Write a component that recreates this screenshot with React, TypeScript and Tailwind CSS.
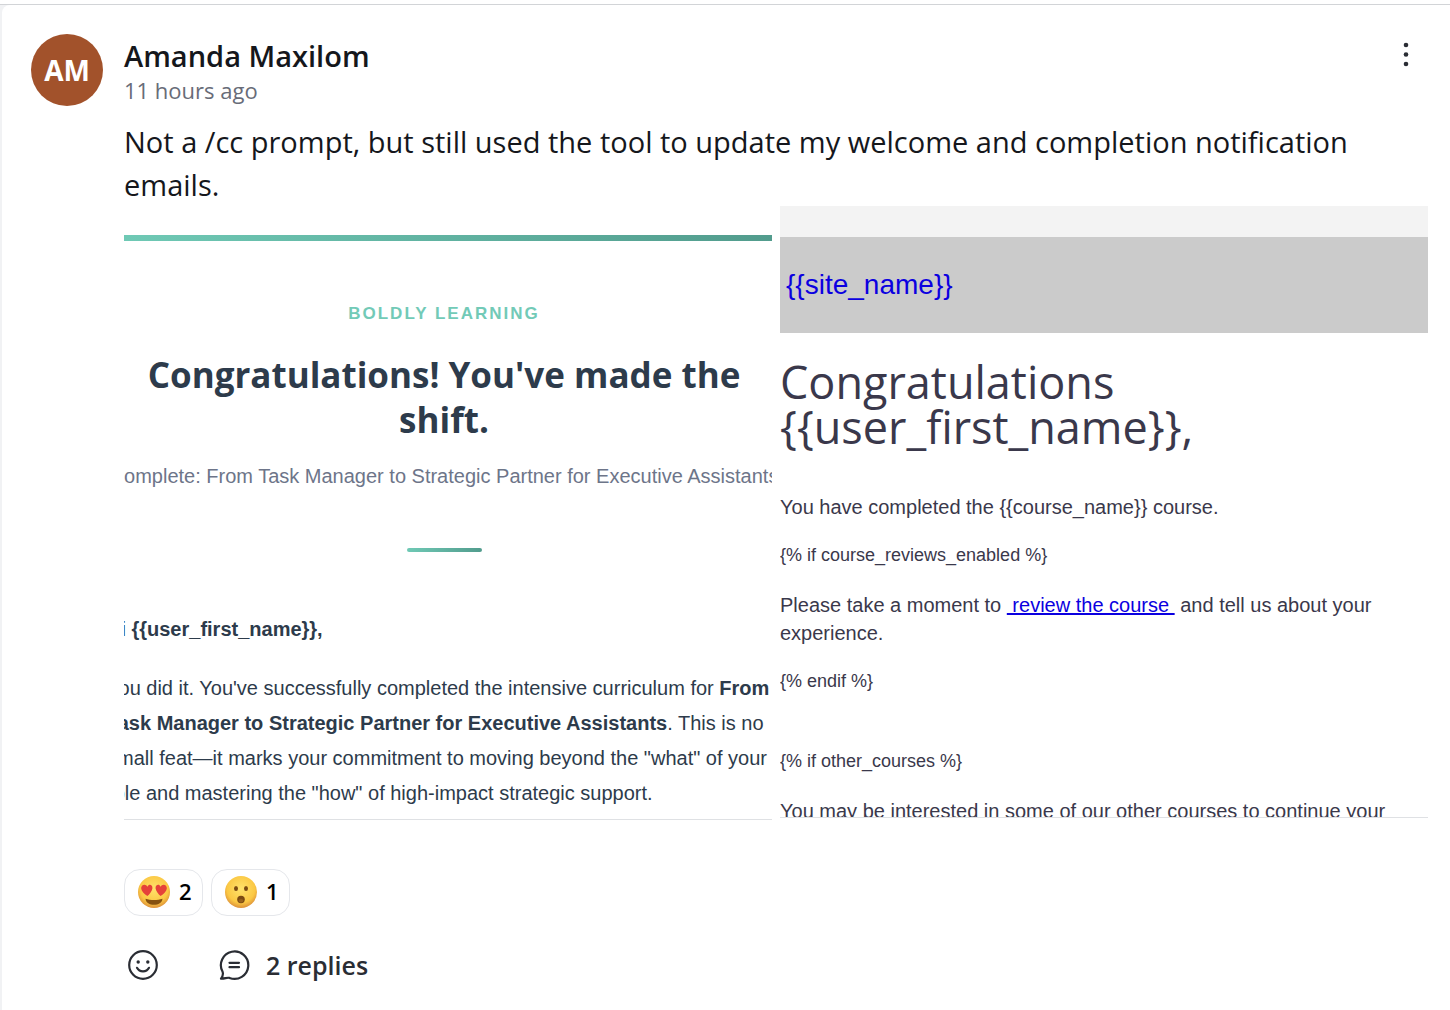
import { ReactNode } from "react";

const HeartEyes = () => (
  <svg className="size-[34px]" viewBox="-1 -1 34 34" aria-hidden="true">
    <defs>
      <radialGradient id="face-a" cx="0.5" cy="0.4" r="0.62">
        <stop offset="0" stopColor="#ffe26b" />
        <stop offset="0.7" stopColor="#fbc844" />
        <stop offset="1" stopColor="#d98a38" />
      </radialGradient>
    </defs>
    <circle cx="16" cy="16" r="16" fill="url(#face-a)" />
    <path
      d="M9.500 10.800C7.800 7 2.600 8.600 3.200 12.800c.5 3 3.200 5.200 6.200 7.200 2.300-2.200 4.600-4.800 5-7.600.5-4-3.900-5-4.900-1.600Z"
      fill="#e5423a"
    />
    <path
      d="M22.500 10.800c1.700-3.800 6.900-2.200 6.300 2-.5 3-3.200 5.200-6.200 7.200-2.300-2.200-4.600-4.800-5-7.600-.5-4 3.900-5 4.900-1.600Z"
      fill="#e5423a"
    />
    <path d="M7.500 22.800c5 1.700 12 1.700 17 0-.4 4-4.200 6-8.500 6s-8.100-2-8.500-6Z" fill="#85500f" />
  </svg>
);

const Surprised = () => (
  <svg className="size-[34px]" viewBox="-1 -1 34 34" aria-hidden="true">
    <defs>
      <radialGradient id="face-b" cx="0.5" cy="0.4" r="0.62">
        <stop offset="0" stopColor="#ffe26b" />
        <stop offset="0.7" stopColor="#fbc844" />
        <stop offset="1" stopColor="#d98a38" />
      </radialGradient>
    </defs>
    <circle cx="16" cy="16" r="16" fill="url(#face-b)" />
    <ellipse cx="11" cy="12.500" rx="2" ry="2.600" fill="#7b4a12" />
    <ellipse cx="21" cy="12.500" rx="2" ry="2.600" fill="#7b4a12" />
    <ellipse cx="16" cy="23.500" rx="3.800" ry="3.700" fill="#7b4a12" />
    <ellipse cx="16" cy="24.800" rx="2.400" ry="1.800" fill="#96601d" />
  </svg>
);

const SmileIcon = () => (
  <svg className="size-8" viewBox="0 0 32 32" fill="none" stroke="currentColor" strokeWidth="2.200" strokeLinecap="round" aria-hidden="true">
    <circle cx="16" cy="16" r="13.800" />
    <path d="M10 18.800c1.300 2.400 3.400 3.600 6 3.600s4.700-1.200 6-3.600" />
    <circle cx="11.200" cy="13" r="1.700" fill="currentColor" stroke="none" />
    <circle cx="20.800" cy="13" r="1.700" fill="currentColor" stroke="none" />
  </svg>
);

const CommentIcon = () => (
  <svg className="size-8" viewBox="0 0 32 32" fill="none" stroke="currentColor" strokeWidth="2.200" strokeLinecap="round" strokeLinejoin="round" aria-hidden="true">
    <path d="M4.600 22.800A13.700 13.700 0 1 1 11.500 28.900c-2.400-.8-4.800 1-8.500.7 1.500-1.800 2.500-4 1.600-6.800Z" />
    <path d="M11.500 13.800h9.500M11.500 18.200h9.500" />
  </svg>
);

const Reaction = ({ icon, count, label }: { icon: ReactNode; count: number; label: string }) => (
  <button
    aria-label={label}
    className="flex h-[47px] w-[79px] items-center gap-2 rounded-2xl border border-gray-200 pb-0.5 pl-3 text-[22px] font-semibold text-black"
  >
    {icon}
    {count}
  </button>
);

const CompletionEmail = () => (
  <article className="h-[614px] overflow-hidden border-b border-[#dfe1e4] pt-[29px] font-['Liberation_Sans',sans-serif] text-[#2d3b4b]">
    <div className="h-1.5 bg-linear-to-r from-[#6fc9b5] to-[#529c8d]" />
    <div className="-mr-[9px] -ml-[17px] flex flex-col items-center">
      <p className="mt-[61px] text-[17px] leading-6 font-bold tracking-[2px] text-[#72cab7]">BOLDLY LEARNING</p>
      <h2 className="mt-[26px] px-8 text-center font-['Open_Sans',sans-serif] text-[35px] leading-[45px] font-bold">
        Congratulations! You've made the shift.
      </h2>
      <p className="mt-5 text-[20px] leading-7 whitespace-nowrap text-[#6d7589]">
        Complete: From Task Manager to Strategic Partner for Executive Assistants
      </p>
      <div className="mt-[58px] h-1 w-[75px] rounded-sm bg-linear-to-r from-[#6fc9b5] to-[#529c8d]" />
      <div className="mt-[60px] w-full text-[20px] leading-[35px]">
        <p>
          Hi <strong>{"{{user_first_name}},"}</strong>
        </p>
        <p className="mt-6">
          You did it. You've successfully completed the intensive curriculum for{" "}
          <strong>From Task Manager to Strategic Partner for Executive Assistants</strong>. This is no small feat—it
          marks your commitment to moving beyond the "what" of your role and mastering the "how" of high-impact
          strategic support.
        </p>
      </div>
    </div>
  </article>
);

const TemplateEmail = () => (
  <article className="h-[612px] overflow-hidden border-b border-[#dfe1e4] font-['Liberation_Sans',sans-serif] text-[#3a384b]">
    <div className="h-[31px] bg-[#f3f3f3]" />
    <div className="flex h-24 items-center bg-[#cbcbcb] px-1.5 text-[28px] text-[#0b00e0]">
      <a href="#site">{"{{site_name}}"}</a>
    </div>
    <h2 className="mt-[26px] font-['Open_Sans',sans-serif] text-[45px] leading-[45px]">
      Congratulations <br />
      {"{{user_first_name}},"}
    </h2>
    <div className="mt-11 flex flex-col gap-5 text-[20px] leading-7">
      <p>{"You have completed the {{course_name}} course."}</p>
      <p className="text-[18px]">{"{% if course_reviews_enabled %}"}</p>
      <p className="pt-0.5">
        Please take a moment to{" "}
        <a href="#review" className="whitespace-pre text-[#0b00e0] underline">
          {" review the course "}
        </a>{" "}
        and tell us about your experience.
      </p>
      <p className="text-[18px]">{"{% endif %}"}</p>
      <p className="mt-8 text-[18px]">{"{% if other_courses %}"}</p>
      <p className="pt-0.5">You may be interested in some of our other courses to continue your learning.</p>
    </div>
  </article>
);

const App = () => {
  return (
    <div className="min-h-screen bg-white pt-1 font-['Open_Sans',sans-serif]">
      <main className="border-t border-[#d2d4d7] bg-[#f1f2f4]">
        <section className="ml-0.5 flex min-h-[1005px] gap-[21px] rounded-tl-lg bg-white pt-[29px] pr-[22px] pl-[29px]">
          <div className="flex size-18 shrink-0 items-center justify-center rounded-full bg-[#a2522b] text-[28px] font-bold text-white">
            AM
          </div>
          <div className="min-w-0 flex-1">
            <header className="flex items-start justify-between">
              <div>
                <h1 className="pt-0.5 text-[29px] leading-10 font-semibold text-[#15171c]">Amanda Maxilom</h1>
                <p className="text-[22px] leading-7 text-[#686c78]">11 hours ago</p>
              </div>
              <button aria-label="More options" className="flex h-10 w-11 items-center justify-center text-[#2a2d34]">
                <svg className="h-7 w-2" viewBox="0 0 8 28" fill="currentColor" aria-hidden="true">
                  <circle cx="4" cy="5" r="2.300" />
                  <circle cx="4" cy="14.500" r="2.300" />
                  <circle cx="4" cy="24" r="2.300" />
                </svg>
              </button>
            </header>

            <p className="mt-4 text-[29px] leading-[43px] text-[#15171c]">
              Not a /cc prompt, but still used the tool to update my welcome and completion notification emails.
            </p>

            <div className="grid grid-cols-2 gap-2">
              <CompletionEmail />
              <TemplateEmail />
            </div>

            <div className="mt-[49px] flex gap-2">
              <Reaction icon={<HeartEyes />} count={2} label="Heart eyes, 2" />
              <Reaction icon={<Surprised />} count={1} label="Surprised, 1" />
            </div>

            <div className="mt-[31px] flex items-center gap-[59px] pl-[3px] text-[#2a2d34]">
              <button aria-label="Add reaction">
                <SmileIcon />
              </button>
              <button className="flex items-center gap-4 text-[25px] leading-9 font-semibold">
                <CommentIcon />2 replies
              </button>
            </div>
          </div>
        </section>
      </main>
    </div>
  );
};

export default App;
